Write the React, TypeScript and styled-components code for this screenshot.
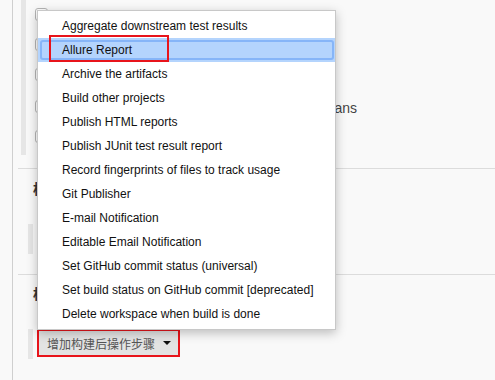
import React from "react";
import styled, { createGlobalStyle } from "styled-components";

const Global = createGlobalStyle`
  html, body { margin: 0; padding: 0; }
  body {
    background: #f9f9f9;
    font-family: "Liberation Sans", Arial, "Noto Sans CJK SC", sans-serif;
    width: 495px;
    height: 380px;
    overflow: hidden;
  }
`;

const Page = styled.div`
  position: relative;
  width: 495px;
  height: 380px;
  overflow: hidden;
`;

const Frame = styled.div`
  margin-left: 12px;
  border-left: 1px solid #cfcfcf;
  height: 380px;
  display: flex;
  flex-direction: column;
`;

const TopSection = styled.div`
  display: flex;
  height: 168px;
`;

const Band = styled.div<{ $left: number; $h: number; $top?: number }>`
  flex: none;
  width: 5px;
  height: ${(p) => p.$h}px;
  margin-left: ${(p) => p.$left}px;
  margin-top: ${(p) => p.$top ?? 0}px;
  background: #e6e6e6;
`;

const Rows = styled.div`
  display: flex;
  flex-direction: column;
  margin-left: 9px;
  padding-top: 8px;
  gap: 17px;
`;

const Row = styled.div<{ $shift?: number }>`
  display: flex;
  align-items: center;
  gap: 4px;
  height: 13px;
  margin-top: ${(p) => p.$shift ?? 0}px;
  font-size: 14px;
  line-height: 13px;
  color: #444;
  white-space: nowrap;
`;

const Label = styled.span`
  position: relative;
  top: 2px;
`;

const Check = styled.span`
  width: 11px;
  height: 11px;
  border: 1px solid #b5b5b5;
  border-radius: 3px;
  background: #fff;
  flex: none;
`;

const Separator = styled.div`
  margin-left: 5px;
  border-top: 1px solid #dcdcdc;
`;

const Section = styled.div<{ $h: number }>`
  height: ${(p) => p.$h}px;
  display: flex;
  flex-direction: column;
`;

const Heading = styled.div<{ $top: number }>`
  margin: ${(p) => p.$top}px 0 0 20px;
  font-family: "Noto Sans CJK SC", sans-serif;
  font-weight: bold;
  font-size: 14px;
  line-height: 16px;
  color: #333;
`;

const BarRow = styled.div<{ $top: number }>`
  display: flex;
  align-items: flex-start;
  margin-top: ${(p) => p.$top}px;
`;

const AddWrap = styled.div`
  margin-left: 4px;
  border: 2px solid #e8141b;
  display: flex;
`;

const AddButton = styled.button`
  display: flex;
  align-items: center;
  gap: 8px;
  height: 24px;
  padding: 0 7px 0 8px;
  background: #e3e3e3;
  border: none;
  font-family: "Noto Sans CJK SC", sans-serif;
  font-size: 12px;
  color: #555;
  cursor: pointer;
`;

const Caret = styled.span`
  width: 0;
  height: 0;
  border-left: 4px solid transparent;
  border-right: 4px solid transparent;
  border-top: 4px solid #111;
`;

const Menu = styled.ul`
  position: absolute;
  left: 37px;
  top: 10px;
  width: 297px;
  margin: 0;
  padding: 3px 0 3px;
  list-style: none;
  background: #fff;
  border: 1px solid #c8c8c8;
  box-shadow: 0 3px 10px rgba(0, 0, 0, 0.25);
`;

const Item = styled.li<{ $active?: boolean }>`
  position: relative;
  height: 24px;
  line-height: 24px;
  padding-left: 24px;
  font-size: 12px;
  color: #111;
  white-space: nowrap;
  background: ${(p) => (p.$active ? "#b4d4fd" : "transparent")};
`;

const Focus = styled.span`
  position: absolute;
  left: 2px;
  right: 1px;
  top: 2px;
  bottom: 2px;
  border: 2px solid #86b5f8;
  border-radius: 3px;
  pointer-events: none;
`;

const Mark = styled.span`
  position: absolute;
  left: 11px;
  top: -3px;
  width: 116px;
  height: 23px;
  border: 2px solid #e8141b;
  pointer-events: none;
`;

const items = [
  "Aggregate downstream test results",
  "Allure Report",
  "Archive the artifacts",
  "Build other projects",
  "Publish HTML reports",
  "Publish JUnit test result report",
  "Record fingerprints of files to track usage",
  "Git Publisher",
  "E-mail Notification",
  "Editable Email Notification",
  "Set GitHub commit status (universal)",
  "Set build status on GitHub commit [deprecated]",
  "Delete workspace when build is done",
];

const options = [
  { t: "Abort the build if it's stuck", s: 0 },
  { t: "Add timestamps to the Console Output", s: 0 },
  { t: "With Ant", s: 0 },
  { t: "Inspect build log for published Gradle build scans", s: 2 },
  { t: "Use secret text(s) or file(s)", s: 0 },
];

export default function App() {
  return (
    <Page>
      <Global />
      <Frame>
        <TopSection>
          <Band $left={8} $h={155} />
          <Rows>
            {options.map((o) => (
              <Row key={o.t} $shift={o.s}>
                <Check />
                <Label>{o.t}</Label>
              </Row>
            ))}
          </Rows>
        </TopSection>
        <Separator />
        <Section $h={105}>
          <Heading $top={11}>构建环境</Heading>
          <BarRow $top={28}>
            <Band $left={15} $h={30} />
          </BarRow>
        </Section>
        <Separator />
        <Section $h={105}>
          <Heading $top={10}>构建后操作</Heading>
          <BarRow $top={28}>
            <Band $left={15} $h={30} />
            <AddWrap>
              <AddButton>
                增加构建后操作步骤
                <Caret />
              </AddButton>
            </AddWrap>
          </BarRow>
        </Section>
      </Frame>
      <Menu>
        {items.map((t, i) => (
          <Item key={t} $active={i === 1}>
            {i === 1 && <Focus />}
            {i === 1 && <Mark />}
            {t}
          </Item>
        ))}
      </Menu>
    </Page>
  );
}
